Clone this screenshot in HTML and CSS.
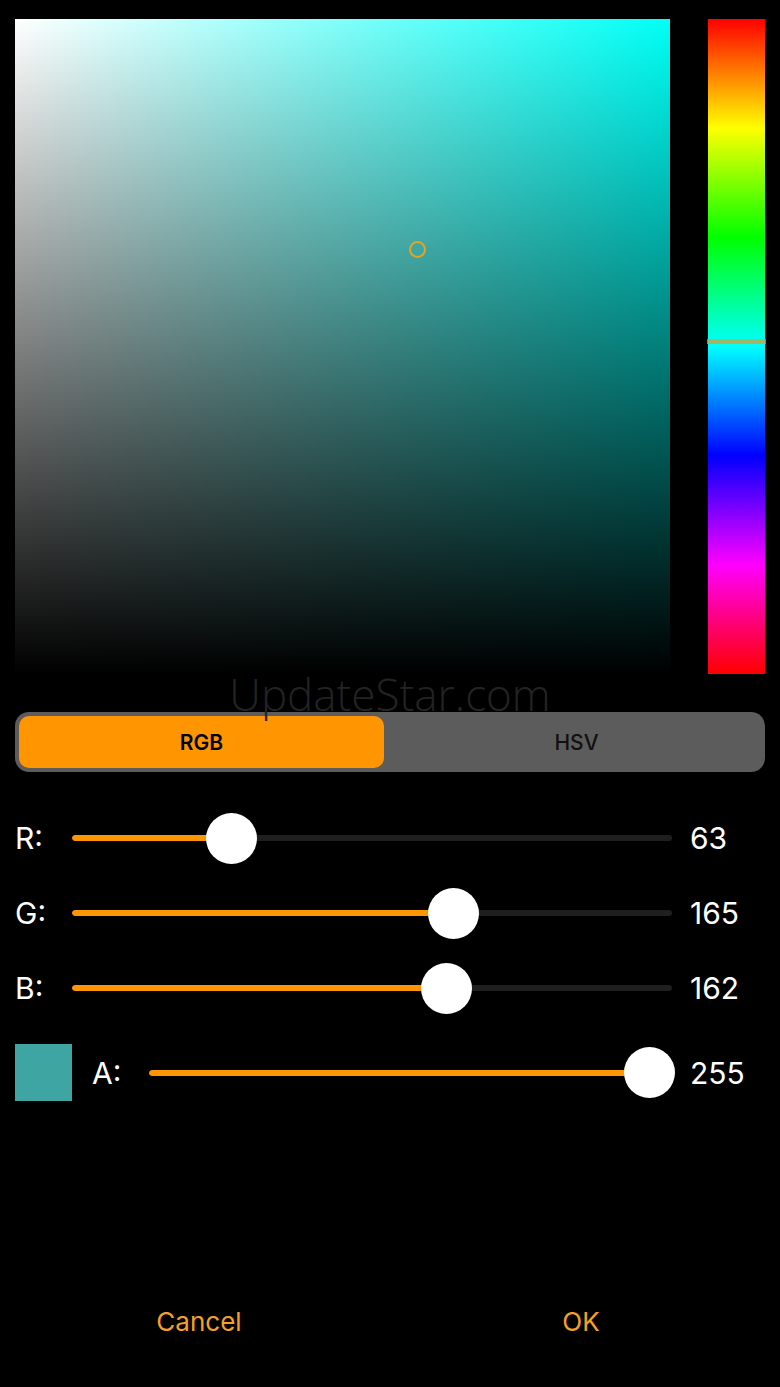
FILE: index.html
```html
<!DOCTYPE html>
<html lang="en">
<head>
<meta charset="utf-8">
<title>Color Picker</title>
<link rel="stylesheet" href="styles.css">
</head>
<body>
<div class="page">
  <div class="picker">
    <div class="sv">
      <div class="sv-cursor"></div>
    </div>
    <div class="hue">
      <div class="hue-marker"></div>
    </div>
  </div>

  <div class="seg-wrap">
    <div class="watermark">UpdateStar.com</div>
    <div class="seg">
      <div class="seg-item active">RGB</div>
      <div class="seg-item">HSV</div>
    </div>
  </div>

  <div class="rows">
    <div class="row">
      <div class="label">R:</div>
      <div class="slider" style="--p:0.247"><div class="track"><div class="fill"></div></div><div class="thumb"></div></div>
      <div class="value">63</div>
    </div>
    <div class="row">
      <div class="label">G:</div>
      <div class="slider" style="--p:0.647"><div class="track"><div class="fill"></div></div><div class="thumb"></div></div>
      <div class="value">165</div>
    </div>
    <div class="row">
      <div class="label">B:</div>
      <div class="slider" style="--p:0.635"><div class="track"><div class="fill"></div></div><div class="thumb"></div></div>
      <div class="value">162</div>
    </div>
    <div class="row row-alpha">
      <div class="swatch"></div>
      <div class="label label-a">A:</div>
      <div class="slider" style="--p:1"><div class="track"><div class="fill"></div></div><div class="thumb"></div></div>
      <div class="value">255</div>
    </div>
  </div>

  <div class="actions">
    <div class="btn">Cancel</div>
    <div class="btn">OK</div>
  </div>
</div>
</body>
</html>
```

FILE: styles.css
```css
* { box-sizing: border-box; }
html, body { margin: 0; padding: 0; background: #000; }
body {
  width: 780px;
  height: 1387px;
  overflow: hidden;
  font-family: Inter, "Liberation Sans", sans-serif;
  color: #fff;
}
.page { padding: 19px 15px 0 15px; }

.picker { display: flex; gap: 38px; }
.sv {
  position: relative;
  width: 655px;
  height: 655px;
  background:
    linear-gradient(to top, #000 0%, rgba(0,0,0,0) 100%),
    linear-gradient(to right, #fff 0%, rgba(255,255,255,0) 100%),
    #00fff6;
}
.sv-cursor {
  position: absolute;
  left: 394px;
  top: 222px;
  width: 17px;
  height: 17px;
  border: 2.5px solid #e9a318;
  border-radius: 50%;
}
.hue {
  position: relative;
  width: 57px;
  height: 655px;
  background: linear-gradient(to bottom, #ff0000 0%, #ffff00 16.67%, #00ff00 33.33%, #00ffff 50%, #0000ff 66.67%, #ff00ff 83.33%, #ff0000 100%);
}
.hue-marker {
  position: absolute;
  left: -1px;
  right: -1px;
  top: 320px;
  height: 5px;
  background: rgba(200, 165, 70, 0.8);
}

.seg-wrap { position: relative; margin-top: 38px; }
.watermark {
  position: absolute;
  left: 0;
  right: 0;
  top: -44px;
  text-align: center;
  font-family: "Open Sans", sans-serif;
  font-weight: 300;
  font-size: 44px;
  line-height: 52px;
  color: #232323;
  z-index: 2;
  pointer-events: none;
}
.seg {
  display: grid;
  grid-template-columns: 365px 1fr;
  height: 60px;
  padding: 4px;
  background: #5c5c5c;
  border-radius: 14px;
}
.seg-item {
  display: flex;
  align-items: center;
  justify-content: center;
  font-size: 21px;
  font-weight: 500;
  color: #111;
  border-radius: 10px;
  padding-left: 8px;
}
.seg-item.active {
  background: #ff9500;
  font-weight: 600;
  color: #000;
  padding-left: 0;
}

.rows {
  display: flex;
  flex-direction: column;
  gap: 23px;
  margin-top: 40px;
}
.row {
  display: flex;
  align-items: center;
  height: 52px;
}
.row-alpha { height: 57px; margin-top: 7px; }
.label {
  width: 57px;
  font-size: 30px;
  line-height: 1;
}
.label-a { margin-left: 20px; }
.swatch {
  width: 57px;
  height: 57px;
  background: rgb(63, 165, 162);
}
.slider {
  position: relative;
  flex: 1;
  height: 52px;
  display: flex;
  align-items: center;
}
.track {
  width: 100%;
  height: 6px;
  border-radius: 3px;
  background: #1f1f1f;
  overflow: hidden;
}
.fill {
  height: 100%;
  width: calc(var(--p) * (100% - 46px) + 23px);
  background: #ff9500;
  border-radius: 3px;
}
.thumb {
  position: absolute;
  top: 0.5px;
  left: calc(var(--p) * (100% - 46px) - 2.5px);
  width: 51px;
  height: 51px;
  border-radius: 50%;
  background: #fff;
}
.value {
  width: 75px;
  margin-left: 18px;
  font-size: 30px;
  line-height: 1;
}

.actions {
  display: grid;
  grid-template-columns: 1fr 1fr;
  margin: 190px -7px 0 -7px;
  height: 60px;
}
.btn {
  display: flex;
  align-items: center;
  justify-content: center;
  font-size: 26px;
  color: #f7a027;
}
```
